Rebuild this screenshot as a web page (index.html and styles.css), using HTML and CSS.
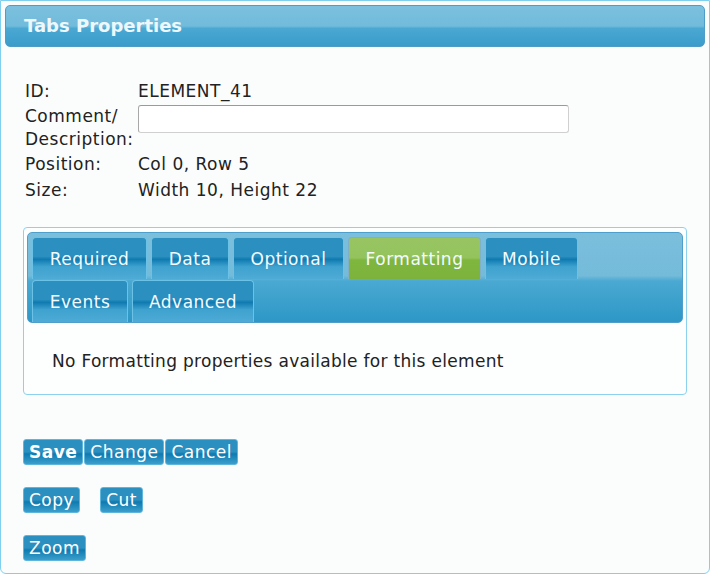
FILE: index.html
```html
<!DOCTYPE html>
<html lang="en">
<head>
    <meta charset="UTF-8">
    <title>Tabs Properties</title>
    <link rel="stylesheet" href="styles.css">
</head>
<body>
    <div class="frame">
        <header class="titlebar">
            <h1>Tabs Properties</h1>
        </header>

        <div class="props">
            <div class="prop-row">
                <span class="prop-label">ID:</span>
                <span class="prop-value">ELEMENT_41</span>
            </div>
            <div class="prop-row">
                <span class="prop-label">Comment/<br>Description:</span>
                <input class="prop-input" type="text">
            </div>
            <div class="prop-row">
                <span class="prop-label">Position:</span>
                <span class="prop-value">Col 0, Row 5</span>
            </div>
            <div class="prop-row">
                <span class="prop-label">Size:</span>
                <span class="prop-value">Width 10, Height 22</span>
            </div>
        </div>

        <div class="tabs-box">
            <ul class="tab-strip">
                <li class="tab t-required">Required</li>
                <li class="tab t-data">Data</li>
                <li class="tab t-optional">Optional</li>
                <li class="tab t-formatting active">Formatting</li>
                <li class="tab t-mobile">Mobile</li>
                <li class="tab t-events">Events</li>
                <li class="tab t-advanced">Advanced</li>
            </ul>
            <p class="tab-content">No Formatting properties available for this element</p>
        </div>

        <div class="actions">
            <div class="btn-row">
                <button class="btn bold">Save</button><button class="btn">Change</button><button class="btn">Cancel</button>
            </div>
            <div class="btn-row spaced">
                <button class="btn">Copy</button>
                <button class="btn">Cut</button>
            </div>
            <div class="btn-row">
                <button class="btn">Zoom</button>
            </div>
        </div>
    </div>
</body>
</html>
```

FILE: styles.css
```css
html, body {
    margin: 0;
    padding: 0;
    background: #ffffff;
}
body {
    font-family: 'DejaVu Sans', Verdana, sans-serif;
    color: #222;
    font-size: 17px;
    letter-spacing: 0.5px;
}
.frame {
    width: 708px;
    height: 572px;
    border: 1px solid #7fd0ef;
    border-radius: 0 0 6px 6px;
    background: #fbfdfd;
    overflow: hidden;
}
.titlebar {
    margin: 4px 4px 0 4px;
    height: 42px;
    border: 1px solid #4e9dc8;
    border-radius: 5px;
    background: linear-gradient(to bottom, #7cc0de 0%, #72bbdb 50%, #4aa8d2 56%, #3b9ccb 100%);
    box-sizing: border-box;
}
.titlebar h1 {
    margin: 0;
    padding: 9px 0 0 18px;
    font-size: 18px;
    font-weight: bold;
    letter-spacing: 0;
    color: #eef8fc;
}
.props {
    padding: 33px 0 0 24px;
}
.prop-row {
    display: flex;
    align-items: flex-start;
    line-height: 23px;
    margin-bottom: 2px;
}
.prop-row:nth-child(3) {
    margin-bottom: 3px;
}
.prop-label {
    width: 113px;
    flex: none;
}
.prop-input {
    margin: 0;
    width: 431px;
    height: 28px;
    box-sizing: border-box;
    border: 1px solid #d0d0d0;
    border-top-color: #9a9a9a;
    border-left-color: #a8a8a8;
    border-radius: 3px;
    background: #fff;
}
.tabs-box {
    margin: 25px 22px 0 22px;
    height: 168px;
    border: 1px solid #8cd2ef;
    border-radius: 4px;
    background: #fdfefe;
    box-sizing: border-box;
    padding: 4px 3px 0 3px;
}
.tab-strip {
    list-style: none;
    margin: 0;
    padding: 4px 100px 0 4px;
    height: 91px;
    box-sizing: border-box;
    border: 1px solid #4f9fcc;
    border-radius: 5px;
    background: linear-gradient(to bottom, #7bbfdc 0%, #74bbda 48%, #4aa9d2 54%, #2d97c6 100%);
    display: flex;
    flex-wrap: wrap;
    align-content: flex-start;
    column-gap: 4px;
}
.tab {
    height: 42px;
    box-sizing: border-box;
    border: 1px solid #6cc1e6;
    border-bottom: none;
    border-radius: 4px 4px 0 0;
    background: linear-gradient(to bottom, #2b8fbf 0%, #2b8fbf 45%, #0f7ab0 52%, #3fa2cf 70%, #4eabd5 100%);
    color: #f4fbff;
    padding-top: 1px;
    line-height: 41px;
    text-align: center;
    margin-bottom: 1px;
}
.tab.active {
    background: linear-gradient(to bottom, #98c562 0%, #94c35d 48%, #7fb63e 54%, #7db33c 100%);
    border-color: #7fb0c8;
}
.t-required { width: 115px; }
.t-data { width: 78px; }
.t-optional { width: 111px; }
.t-formatting { width: 133px; }
.t-mobile { width: 93px; }
.t-events { width: 96px; }
.t-advanced { width: 122px; }
.tab-content {
    margin: 28px 0 0 25px;
    letter-spacing: 0.3px;
}
.actions {
    padding: 44px 0 0 22px;
}
.btn-row {
    display: flex;
    height: 26px;
    margin-bottom: 22px;
}
.btn-row.spaced {
    gap: 19px;
}
.btn {
    margin: 0 1px 0 0;
    height: 26px;
    padding: 0 5px;
    box-sizing: border-box;
    border: 1px solid #5fb6dd;
    border-radius: 3px;
    background: linear-gradient(to bottom, #2b8fbf 0%, #2b8fbf 50%, #0f7ab0 58%, #3b9fcc 100%);
    color: #fff;
    font-family: 'DejaVu Sans', Verdana, sans-serif;
    font-size: 17px;
    letter-spacing: 0.5px;
    line-height: 24px;
}
.btn.bold {
    font-weight: bold;
}
```
